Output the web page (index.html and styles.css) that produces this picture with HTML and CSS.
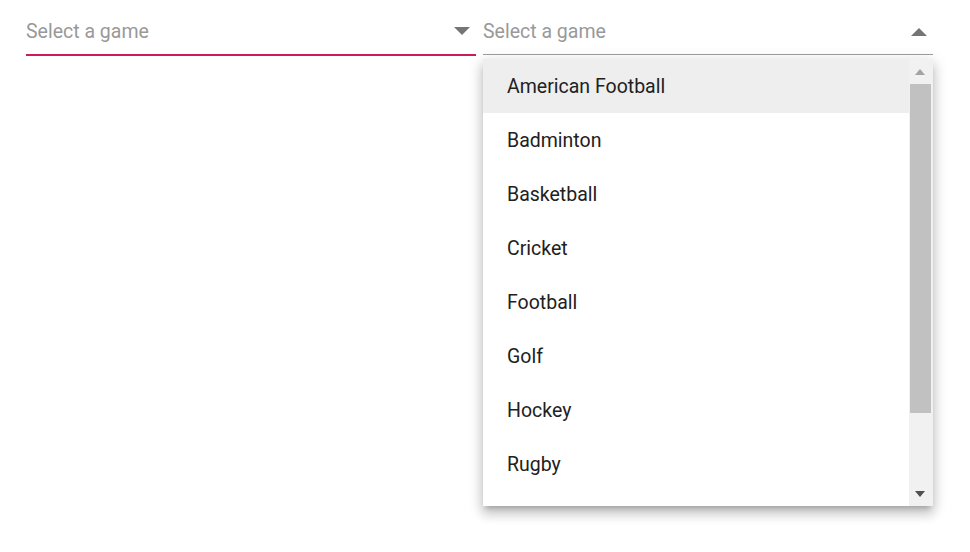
FILE: index.html
```html
<!DOCTYPE html>
<html>
<head>
<meta charset="utf-8">
<link rel="stylesheet" href="styles.css">
</head>
<body>
<div class="row">
  <div class="field focused">
    <span class="placeholder">Select a game</span>
    <span class="caret down"></span>
  </div>
  <div class="field open">
    <span class="placeholder">Select a game</span>
    <span class="caret up"></span>
  </div>
</div>
<div class="popup">
  <ul class="list">
    <li class="item active">American Football</li>
    <li class="item">Badminton</li>
    <li class="item">Basketball</li>
    <li class="item">Cricket</li>
    <li class="item">Football</li>
    <li class="item">Golf</li>
    <li class="item">Hockey</li>
    <li class="item">Rugby</li>
  </ul>
  <div class="scrollbar">
    <div class="sb-btn"><span class="sb-arrow sb-up"></span></div>
    <div class="sb-thumb"></div>
    <div class="sb-fill"></div>
    <div class="sb-btn"><span class="sb-arrow sb-down"></span></div>
  </div>
</div>
</body>
</html>
```
FILE: styles.css
```css
html, body {
  margin: 0;
  padding: 0;
  background: #ffffff;
  font-family: Roboto, "Noto Sans", sans-serif;
}
.row {
  display: flex;
  gap: 7px;
  padding-left: 26px;
}
.field {
  width: 450px;
  height: 54px;
  box-sizing: content-box;
  display: flex;
  align-items: flex-start;
  justify-content: space-between;
}
.field.focused {
  border-bottom: 2px solid #cc1a5c;
}
.field.open {
  border-bottom: 1px solid #9e9e9e;
}
.placeholder {
  margin-top: 20px;
  font-size: 19.5px;
  line-height: 24px;
  color: #999999;
}
.caret {
  width: 0;
  height: 0;
  margin-right: 6px;
  border-left: 8px solid transparent;
  border-right: 8px solid transparent;
}
.caret.down {
  margin-top: 27px;
  border-top: 8px solid #757575;
}
.caret.up {
  margin-top: 28px;
  border-bottom: 8px solid #757575;
}
.popup {
  position: absolute;
  top: 59px;
  left: 483px;
  width: 450px;
  height: 447px;
  display: flex;
  background: #ffffff;
  overflow: hidden;
  box-shadow: 0 5px 5px -3px rgba(0,0,0,0.2), 0 8px 10px 1px rgba(0,0,0,0.14), 0 3px 14px 2px rgba(0,0,0,0.12);
}
.list {
  list-style: none;
  margin: 0;
  padding: 0;
  flex: 1;
  overflow: hidden;
}
.item {
  height: 52px;
  padding-top: 2px;
  line-height: 52px;
  padding-left: 24px;
  font-size: 19.5px;
  color: #212121;
}
.item.active {
  background: #eeeeee;
}
.scrollbar {
  width: 24px;
  background: #f1f1f1;
  display: flex;
  flex-direction: column;
}
.sb-btn {
  height: 25px;
  display: flex;
  align-items: center;
  justify-content: center;
}
.sb-arrow {
  width: 0;
  height: 0;
  border-left: 5.5px solid transparent;
  border-right: 5.5px solid transparent;
  margin-left: -2px;
}
.sb-up {
  border-bottom: 6px solid #a3a3a3;
}
.sb-down {
  border-top: 6px solid #505050;
}
.sb-thumb {
  height: 329px;
  margin: 0 2px 0 1px;
  background: #c1c1c1;
}
.sb-fill {
  flex: 1;
}
```
